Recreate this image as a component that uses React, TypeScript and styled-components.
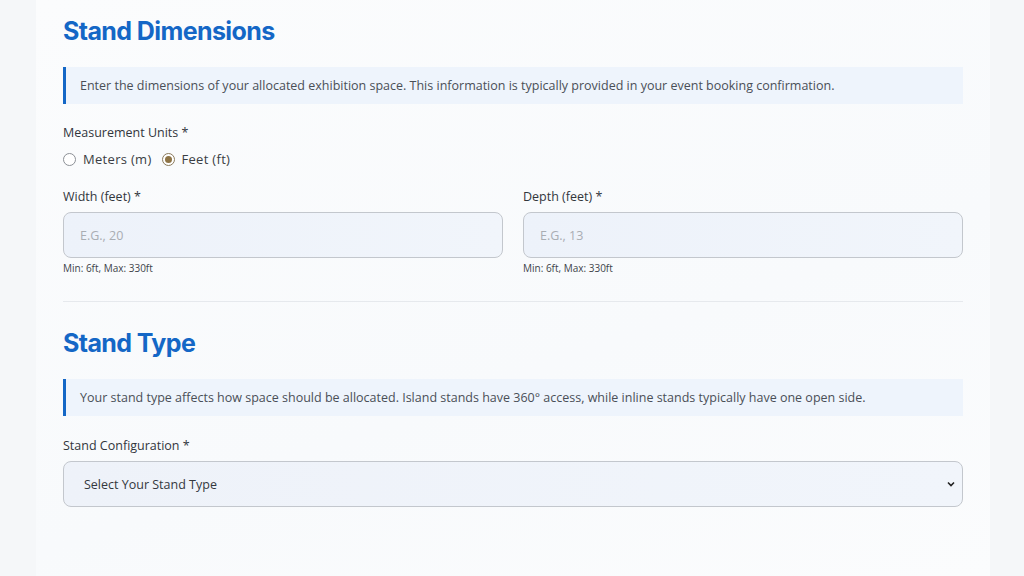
import React from "react";
import styled, { createGlobalStyle } from "styled-components";

const GlobalStyle = createGlobalStyle`
  html, body {
    margin: 0;
    padding: 0;
    background: #f6f8fa;
    font-family: "Open Sans", "Liberation Sans", sans-serif;
  }
`;

const Page = styled.div`
  width: 1024px;
  height: 576px;
  overflow: hidden;
  background: #f5f7f9;
  display: flex;
  justify-content: center;
`;

const Card = styled.div`
  width: 954px;
  margin-left: 2px;
  background: linear-gradient(160deg, #fbfcfd 0%, #f8fafc 60%, #fbfcfd 100%);
  padding: 14px 27px 0 27px;
  box-sizing: border-box;
`;

const SectionTitle = styled.h2<{ $top?: number }>`
  margin: ${(p) => p.$top ?? 0}px 0 0 0;
  font-family: Inter, "Liberation Sans", sans-serif;
  font-weight: 700;
  font-size: 25px;
  letter-spacing: -0.6px;
  color: #1467c6;
  line-height: 34px;
`;

const InfoBox = styled.div`
  margin-top: 19px;
  height: 37px;
  display: flex;
  align-items: center;
  padding-left: 14px;
  background: #eef4fc;
  border-left: 3px solid #1467c6;
  font-size: 12.5px;
  color: #4a4f57;
`;

const Label = styled.div`
  font-size: 12.5px;
  color: #32363c;
  font-weight: 500;
  line-height: 16px;
`;

const Field = styled.div<{ $top: number }>`
  margin-top: ${(p) => p.$top}px;
  display: flex;
  flex-direction: column;
`;

const RadioRow = styled.div`
  display: flex;
  align-items: center;
  gap: 10px;
  margin-top: 9px;
`;

const RadioOption = styled.label`
  display: flex;
  align-items: center;
  gap: 7px;
  font-size: 13px;
  letter-spacing: 0.3px;
  color: #3a3e44;
`;

const RadioDot = styled.span<{ $checked?: boolean }>`
  width: 11px;
  height: 11px;
  border-radius: 50%;
  border: 1px solid ${(p) => (p.$checked ? "#8a7a5c" : "#8c9096")};
  background: #fff;
  display: flex;
  align-items: center;
  justify-content: center;
  &::after {
    content: "";
    display: ${(p) => (p.$checked ? "block" : "none")};
    width: 7px;
    height: 7px;
    border-radius: 50%;
    background: #8e7446;
  }
`;

const TwoCols = styled.div`
  display: grid;
  grid-template-columns: 1fr 1fr;
  gap: 20px;
  margin-top: 21px;
`;

const Input = styled.div`
  margin-top: 7px;
  height: 46px;
  box-sizing: border-box;
  border: 1px solid #c3c7cd;
  border-radius: 8px;
  background: linear-gradient(90deg, #edf2fa 0%, #f1f5fb 100%);
  display: flex;
  align-items: center;
  padding-left: 16px;
  font-size: 12.5px;
  color: #a9adb3;
`;

const Hint = styled.div`
  margin-top: 3px;
  font-size: 10px;
  color: #40444a;
`;

const Divider = styled.hr`
  margin: 26px 0 0 0;
  border: none;
  border-top: 1px solid #e6e9ed;
`;

const Select = styled.div`
  margin-top: 7px;
  height: 46px;
  box-sizing: border-box;
  border: 1px solid #c3c7cd;
  border-radius: 8px;
  background: linear-gradient(90deg, #eef2f9 0%, #f1f5fb 100%);
  display: flex;
  align-items: center;
  justify-content: space-between;
  padding: 0 6px 0 20px;
  font-size: 12.5px;
  color: #34383e;
`;

const Chevron = () => (
  <svg width="10" height="10" viewBox="0 0 10 10">
    <path d="M2 3.5 L5 6.5 L8 3.5" fill="none" stroke="#222" strokeWidth="1.6" />
  </svg>
);

const App = () => {
  return (
    <Page>
      <GlobalStyle />
      <Card>
        <SectionTitle>Stand Dimensions</SectionTitle>
        <InfoBox>
          Enter the dimensions of your allocated exhibition space. This information is typically
          provided in your event booking confirmation.
        </InfoBox>

        <Field $top={21}>
          <Label>Measurement Units *</Label>
          <RadioRow>
            <RadioOption>
              <RadioDot />
              Meters (m)
            </RadioOption>
            <RadioOption>
              <RadioDot $checked />
              Feet (ft)
            </RadioOption>
          </RadioRow>
        </Field>

        <TwoCols>
          <Field $top={0}>
            <Label>Width (feet) *</Label>
            <Input>E.G., 20</Input>
            <Hint>Min: 6ft, Max: 330ft</Hint>
          </Field>
          <Field $top={0}>
            <Label>Depth (feet) *</Label>
            <Input>E.G., 13</Input>
            <Hint>Min: 6ft, Max: 330ft</Hint>
          </Field>
        </TwoCols>

        <Divider />

        <SectionTitle $top={24}>Stand Type</SectionTitle>
        <InfoBox>
          Your stand type affects how space should be allocated. Island stands have 360° access,
          while inline stands typically have one open side.
        </InfoBox>

        <Field $top={22}>
          <Label>Stand Configuration *</Label>
          <Select>
            Select Your Stand Type
            <Chevron />
          </Select>
        </Field>
      </Card>
    </Page>
  );
};

export default App;
